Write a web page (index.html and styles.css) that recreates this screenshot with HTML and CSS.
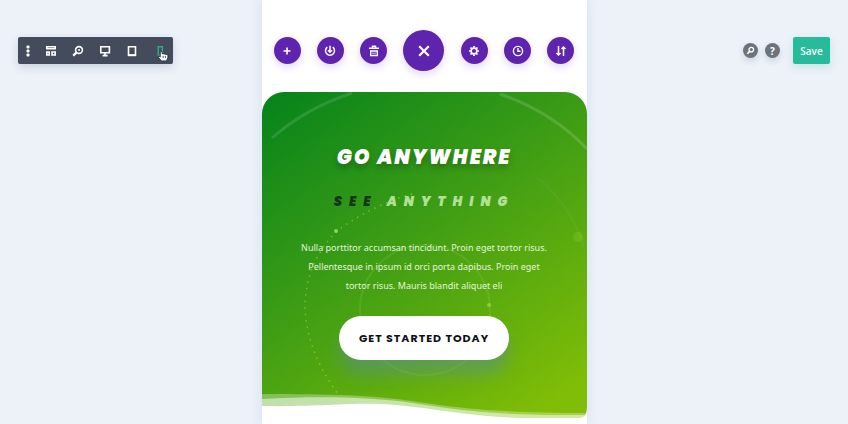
FILE: index.html
```
<!DOCTYPE html>
<html lang="en">
<head>
  <meta charset="UTF-8">
  <meta name="viewport" content="width=device-width, initial-scale=1.0">
  <title>Page Builder</title>
  <link rel="stylesheet" href="styles.css">
</head>
<body>
  <div class="builder">
    <div class="side side-left">
      <div class="view-bar">
        <button class="view-btn dots" aria-label="More options">
          <svg width="4" height="12" viewBox="0 0 4 12" fill="#fff"><rect x=".5" y=".5" width="3" height="3" rx="1"/><rect x=".5" y="4.5" width="3" height="3" rx="1"/><rect x=".5" y="8.5" width="3" height="3" rx="1"/></svg>
        </button>
        <button class="view-btn" aria-label="Wireframe view">
          <svg width="12" height="12" viewBox="0 0 12 12" fill="none" stroke="#fff" stroke-width="1.6"><path d="M1.8 1.8h8.4v2H1.8zM1.8 7h2.4v3H1.8zM7 7h3.2v3H7z"/></svg>
        </button>
        <button class="view-btn" aria-label="Zoom">
          <svg width="12" height="12" viewBox="0 0 12 12" fill="none" stroke="#fff" stroke-width="1.6"><circle cx="7" cy="5" r="3.4"/><path d="M4.6 7.4L1.2 10.6" stroke-width="2.2"/><path d="M6 5h2M7 4v2" stroke-width="1"/></svg>
        </button>
        <button class="view-btn" aria-label="Desktop view">
          <svg width="12" height="12" viewBox="0 0 12 12" fill="none" stroke="#fff" stroke-width="1.6"><path d="M1.8 1.8h8.6v6H1.8z"/><path d="M6 7.5v2.5M3.6 10.6h5"/></svg>
        </button>
        <button class="view-btn" aria-label="Tablet view">
          <svg width="12" height="12" viewBox="0 0 12 12" fill="none" stroke="#fff"><path d="M2.5 1.8h7v8.5h-7z" stroke-width="1.6"/><path d="M2 10.2h8" stroke-width="2"/></svg>
        </button>
        <button class="view-btn phone" aria-label="Phone view">
          <svg width="16" height="18" viewBox="0 0 14 16" fill="none"><path d="M3.7 2.5h3.6V10H3.700z" stroke="#35a884" stroke-width="1.3"/><path d="M5.5 6.5v5L4 10.500V12l2.5 3H11l1.2-3V9.500L7 8.500v-2z" fill="#fff" stroke="#222a36" stroke-width=".7"/><path d="M8 10.500v2M10 10.500v2" stroke="#222a36" stroke-width=".7"/></svg>
        </button>
      </div>
    </div>

    <main class="preview">
      <div class="actions">
        <button class="action" aria-label="Add from library">
          <svg width="12" height="12" viewBox="0 0 12 12" stroke="#fff" stroke-width="1.6"><path d="M6 2.5v7M2.5 6h7"/></svg>
        </button>
        <button class="action" aria-label="Save to library">
          <svg width="12" height="12" viewBox="0 0 12 12" fill="none" stroke="#fff" stroke-width="1.5"><path d="M3.3 2.2a4.5 4.5 0 1 0 5.4 0M6 .8v6M4 5.3l2 2 2-2"/></svg>
        </button>
        <button class="action" aria-label="Clear layout">
          <svg width="12" height="12" viewBox="0 0 12 12" fill="none" stroke="#fff"><path d="M1 3.2h10M4.5 2.5V1.2h3v1.3" stroke-width="1.5"/><path d="M2.7 6h6.6v4.6H2.7z" stroke-width="1.4"/><path d="M5 7.5v2M7 7.5v2" stroke-width="1"/></svg>
        </button>
        <button class="action action-close" aria-label="Close">
          <svg width="16" height="16" viewBox="0 0 14 14" stroke="#fff" stroke-width="1.9"><path d="M2.8 2.8l8.4 8.4M11.2 2.8l-8.4 8.4"/></svg>
        </button>
        <button class="action" aria-label="Page settings">
          <svg width="12" height="12" viewBox="0 0 12 12" fill="none" stroke="#fff"><circle cx="6" cy="6" r="2.9" stroke-width="1.6"/><path d="M6 1v1.7M6 9.3V11M1 6h1.7M9.3 6H11M2.5 2.5l1.2 1.2M8.3 8.3l1.2 1.2M9.5 2.5L8.3 3.7M3.7 8.3L2.5 9.5" stroke-width="1.7"/></svg>
        </button>
        <button class="action" aria-label="Editing history">
          <svg width="12" height="12" viewBox="0 0 12 12" fill="none" stroke="#fff" stroke-width="1.4"><circle cx="6" cy="6" r="4.6"/><path d="M6 3v3.2h2.5"/></svg>
        </button>
        <button class="action" aria-label="Portability">
          <svg width="12" height="12" viewBox="0 0 12 12" fill="none" stroke="#fff" stroke-width="1.5"><path d="M3.5 1v8.5M1.5 8l2 2 2-2M8.5 11V2M6.5 4l2-2 2 2"/></svg>
        </button>
      </div>

      <section class="hero">
        <svg class="hero-art" viewBox="0 0 325 332" preserveAspectRatio="none" fill="none" aria-hidden="true">
          <!-- orbits -->
          <path d="M10 46Q44 16 90 1" stroke="#fff" stroke-opacity=".12" stroke-width="3"/>
          <path d="M238 2Q290 20 325 57" stroke="#fff" stroke-opacity=".14" stroke-width="3"/>
          <path d="M275 85Q310 115 322 155" stroke="#fff" stroke-opacity=".04" stroke-width="2"/>
          <circle cx="163" cy="218" r="65" stroke="#c8f060" stroke-opacity=".12" stroke-width="2"/>
          <path d="M150 102Q113 112 76 138Q43 170 43 216Q45 260 76 302" stroke="#c0e030" stroke-opacity=".5" stroke-width="1.5" stroke-dasharray="1.5 5"/>
          <circle cx="74" cy="139" r="2" fill="#a0e070" fill-opacity=".8"/>
          <circle cx="227" cy="213" r="2" fill="#a0e070" fill-opacity=".6"/>
          <circle cx="316" cy="145" r="5" fill="#a0e040" fill-opacity=".2"/>
          <!-- bottom waves -->
          <path d="M0 302C70 302 110 303 150 309S230 321 325 321V332H0z" fill="#fff" fill-opacity=".3"/>
          <path d="M0 307C55 304 110 305 150 311S230 324 325 323V332H0z" fill="#fff" fill-opacity=".5"/>
          <path d="M0 314C55 315 80 311 120 312C170 315 210 326 270 326H318Q325 326 325 315V332H0z" fill="#fff"/>
        </svg>
        <div class="hero-content">
          <h1>GO ANYWHERE</h1>
          <h2><span class="dark">SEE</span> ANYTHING</h2>
          <p>Nulla porttitor accumsan tincidunt. Proin eget tortor risus. Pellentesque in ipsum id orci porta dapibus. Proin eget tortor risus. Mauris blandit aliquet eli</p>
          <a class="cta" href="#">GET STARTED TODAY</a>
        </div>
      </section>
    </main>

    <div class="side side-right">
      <button class="round" aria-label="Search">
        <svg width="9" height="9" viewBox="0 0 9 9" fill="none" stroke="#fff"><circle cx="5.3" cy="3.6" r="2.3" stroke-width="1.3"/><path d="M3.6 5.4L1.3 7.7" stroke-width="1.6"/></svg>
      </button>
      <button class="round">?</button>
      <button class="save">Save</button>
    </div>
  </div>
</body>
</html>
```
FILE: styles.css
```
body {
  margin: 0;
  background-color: #edf1f8;
  font-family: "Open Sans", sans-serif;
}

button {
  display: flex;
  align-items: center;
  justify-content: center;
  padding: 0;
  border: none;
  color: #fff;
  font-family: inherit;
  cursor: pointer;
}

.builder {
  display: grid;
  grid-template-columns: 1fr minmax(300px, 325px) 1fr;
  min-height: 100vh;
}

.side {
  display: flex;
  align-items: flex-start;
  padding: 37px 18px 0;
}

.side-right {
  justify-content: flex-end;
  gap: 7px;
}

/* Left view switcher */
.view-bar {
  display: flex;
  align-items: center;
  height: 27px;
  padding-right: 1px;
  background-color: #434b5c;
  border-radius: 2px;
  box-shadow: 0 3px 8px rgba(60, 90, 130, 0.2);
}

.view-btn {
  width: 27px;
  height: 27px;
  background: none;
}

.view-btn.dots {
  width: 19px;
}

.view-btn.phone {
  padding: 4px 0 0 6px;
}

/* Phone preview */
.preview {
  display: flex;
  flex-direction: column;
  background-color: #fff;
  box-shadow: 0 0 10px rgba(170, 200, 235, 0.4);
}

.actions {
  display: flex;
  align-items: center;
  justify-content: space-between;
  padding: 30px 12px 21px;
}

.action {
  width: 27px;
  height: 27px;
  border-radius: 50%;
  background-color: #5f24ad;
  box-shadow: 0 3px 8px rgba(110, 40, 200, 0.2);
}

.action-close {
  width: 41px;
  height: 41px;
}

.hero {
  position: relative;
  flex: 1;
  overflow: hidden;
  border-radius: 22px 22px 0 0;
  background: linear-gradient(145deg, #07841b 2%, #3c9c15 42%, #80bd07 92%);
}

.hero-art {
  position: absolute;
  top: 0;
  left: 0;
  width: 100%;
  height: 100%;
}

.hero-content {
  position: relative;
  display: flex;
  flex-direction: column;
  align-items: center;
  padding: 50px 36px 64px;
  text-align: center;
}

h1,
h2 {
  margin: 0;
  font-family: Poppins, Inter, sans-serif;
  font-style: italic;
  font-weight: 900;
  white-space: nowrap;
}

h1 {
  color: #fff;
  font-size: 20px;
  line-height: 30px;
  letter-spacing: 2px;
  text-shadow: 0 4px 6px rgba(0, 0, 0, 0.25);
}

h2 {
  margin-top: 20px;
  color: #b3e096;
  font-size: 13px;
  line-height: 20px;
  letter-spacing: 7px;
}

.dark {
  color: #18351b;
}

p {
  margin: 26px 0 21px;
  color: #e5f5dc;
  font-family: "Noto Sans", sans-serif;
  font-size: 9px;
  line-height: 19px;
}

.cta {
  padding: 0 20px;
  border-radius: 22px;
  background-color: #fff;
  box-shadow: 0 14px 16px rgba(90, 140, 150, 0.5);
  color: #0c1117;
  font-family: Poppins, Inter, sans-serif;
  font-size: 11px;
  font-weight: 700;
  line-height: 44px;
  letter-spacing: 1px;
  text-decoration: none;
  white-space: nowrap;
}

/* Right controls */
.round {
  width: 15px;
  height: 15px;
  margin-top: 6px;
  border-radius: 50%;
  background-color: #6c737b;
  box-shadow: 0 3px 6px rgba(60, 90, 130, 0.2);
  font-size: 10px;
  font-weight: 700;
}

.save {
  width: 37px;
  height: 27px;
  margin-left: 6px;
  border-radius: 2px;
  background-color: #25bb9b;
  box-shadow: 0 3px 8px rgba(40, 180, 150, 0.2);
  font-size: 10px;
  font-weight: 600;
}
```
